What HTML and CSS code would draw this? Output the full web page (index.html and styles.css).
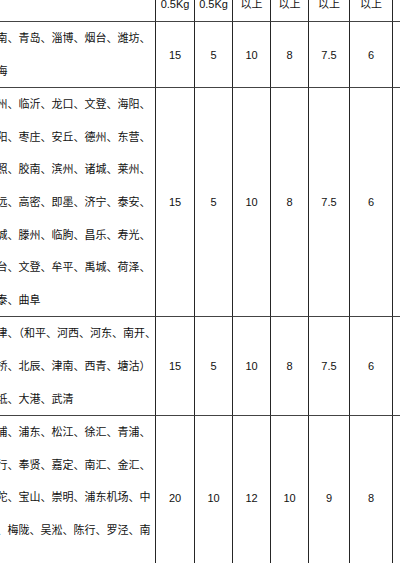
FILE: index.html
```html
<!DOCTYPE html>
<html lang="zh-CN">
<head>
<meta charset="utf-8">
<title>快递资费表</title>
<link rel="stylesheet" href="styles.css">
</head>
<body>
<div class="page">
  <div class="sheet">
    <div class="cell head area">地区<br>&nbsp;</div>
    <div class="cell head">首重<br>0.5Kg</div>
    <div class="cell head">续重<br>0.5Kg</div>
    <div class="cell head">10Kg<br>以上</div>
    <div class="cell head">30Kg<br>以上</div>
    <div class="cell head">50Kg<br>以上</div>
    <div class="cell head">100Kg<br>以上</div>
    <div class="cell head">&nbsp;<br>&nbsp;</div>

    <div class="cell area">济南、青岛、淄博、烟台、潍坊、<br>威海</div>
    <div class="cell num">15</div>
    <div class="cell num">5</div>
    <div class="cell num">10</div>
    <div class="cell num">8</div>
    <div class="cell num">7.5</div>
    <div class="cell num">6</div>
    <div class="cell num"></div>

    <div class="cell area">青州、临沂、龙口、文登、海阳、<br>莱阳、枣庄、安丘、德州、东营、<br>日照、胶南、滨州、诸城、莱州、<br>招远、高密、即墨、济宁、泰安、<br>聊城、滕州、临朐、昌乐、寿光、<br>桓台、文登、牟平、禹城、荷泽、<br>新泰、曲阜</div>
    <div class="cell num">15</div>
    <div class="cell num">5</div>
    <div class="cell num">10</div>
    <div class="cell num">8</div>
    <div class="cell num">7.5</div>
    <div class="cell num">6</div>
    <div class="cell num"></div>

    <div class="cell area">天津、（和平、河西、河东、南开、<br>红桥、北辰、津南、西青、塘沽）<br>宝坻、大港、武清</div>
    <div class="cell num">15</div>
    <div class="cell num">5</div>
    <div class="cell num">10</div>
    <div class="cell num">8</div>
    <div class="cell num">7.5</div>
    <div class="cell num">6</div>
    <div class="cell num"></div>

    <div class="cell area extra">黄浦、浦东、松江、徐汇、青浦、<br>闵行、奉贤、嘉定、南汇、金汇、<br>普陀、宝山、崇明、浦东机场、中<br>山、梅陇、吴淞、陈行、罗泾、南</div>
    <div class="cell num">20</div>
    <div class="cell num">10</div>
    <div class="cell num">12</div>
    <div class="cell num">10</div>
    <div class="cell num">9</div>
    <div class="cell num">8</div>
    <div class="cell num"></div>
  </div>
</div>
</body>
</html>
```
FILE: styles.css
```css
html, body {
  margin: 0;
  padding: 0;
  background: #ffffff;
}

body {
  overflow: hidden;
}

.page {
  width: 400px;
  height: 563px;
  overflow: hidden;
  position: relative;
  font-family: "Liberation Sans", "Noto Sans CJK SC", sans-serif;
  font-size: 11px;
  color: #111111;
}

.sheet {
  display: grid;
  grid-template-columns: 175px 39px 38px 38px 38px 41px 43px 70px;
  margin-left: -19px;
  margin-top: -17px;
  width: max-content;
}

.cell {
  box-sizing: border-box;
  border-right: 1px solid #262626;
  border-bottom: 1px solid #444444;
  min-width: 0;
}

.head {
  line-height: 14px;
  padding-bottom: 10px;
  text-align: center;
  white-space: nowrap;
  overflow: hidden;
}

.area {
  line-height: 32.6px;
  padding-left: 4.5px;
  white-space: nowrap;
  text-align: left;
}

.area.head {
  line-height: 14px;
  text-align: center;
}

.area.extra {
  padding-bottom: 32.6px;
}

.num {
  display: flex;
  align-items: center;
  justify-content: center;
  white-space: nowrap;
}
```
